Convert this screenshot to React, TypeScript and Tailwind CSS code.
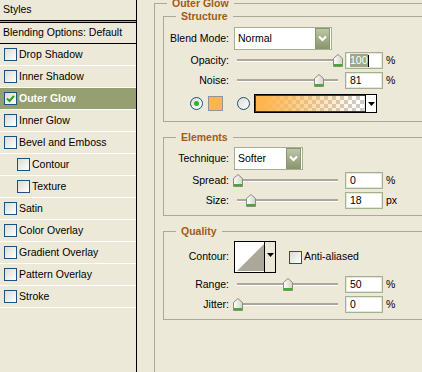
import React from "react";

const styleItems = [
  { name: "Drop Shadow" },
  { name: "Inner Shadow" },
  { name: "Outer Glow", active: true },
  { name: "Inner Glow" },
  { name: "Bevel and Emboss" },
  { name: "Contour", indent: true },
  { name: "Texture", indent: true },
  { name: "Satin" },
  { name: "Color Overlay" },
  { name: "Gradient Overlay" },
  { name: "Pattern Overlay" },
  { name: "Stroke" },
];

const CheckBox: React.FC<{ checked?: boolean }> = ({ checked }) => (
  <div className="flex h-[13px] w-[13px] shrink-0 items-center justify-center border border-[#1c5180] bg-[linear-gradient(135deg,#dcdbd3,#ffffff)]">
    {checked ? (
      <svg width="9" height="9" viewBox="0 0 9 9">
        <path d="M1 4.5 L3.5 7 L8 1.8" fill="none" stroke="#21a121" strokeWidth="2" />
      </svg>
    ) : null}
  </div>
);

const Radio: React.FC<{ checked?: boolean }> = ({ checked }) => (
  <div className="flex h-[13px] w-[13px] shrink-0 items-center justify-center rounded-full border border-[#1c5180] bg-[linear-gradient(135deg,#dcdbd3,#ffffff)]">
    {checked ? <div className="h-[5px] w-[5px] rounded-full bg-[#2cb12c]" /> : null}
  </div>
);

const Thumb = () => (
  <svg width="10" height="13" viewBox="0 0 10 13">
    <defs>
      <linearGradient id="thumbFill" x1="0" y1="0" x2="1" y2="0">
        <stop offset="0" stopColor="#ffffff" />
        <stop offset="1" stopColor="#d4d3c8" />
      </linearGradient>
    </defs>
    <path d="M0.5 4.5 L5 0.5 L9.5 4.5 V12.5 H0.5 Z" fill="url(#thumbFill)" stroke="#8d8b80" />
    <rect x="1" y="10" width="8" height="2" fill="#3fae2a" />
  </svg>
);

// track spans 100px, thumb centre = pct
const Slider: React.FC<{ pct: number }> = ({ pct }) => (
  <div className="relative ml-[4px] h-[17px] w-[109px] shrink-0">
    <div className="absolute left-[4px] right-[4px] top-[7px] h-[2px] bg-[#aca899] shadow-[0_1px_0_#ffffff]" />
    <div className="absolute top-[2px]" style={{ left: pct - 0.5 }}>
      <Thumb />
    </div>
  </div>
);

const NumBox: React.FC<{ value: string; unit: string; selected?: boolean }> = ({
  value,
  unit,
  selected,
}) => (
  <>
    <div className="ml-[3px] flex h-[17px] w-[38px] shrink-0 items-center border border-[#a5b08e] bg-white pl-[4px] shadow-[inset_0_0_0_1px_#e4e8da]">
      {selected ? (
        <>
          <span className="bg-[#9fa78a] leading-[13px] text-white">{value}</span>
          <span className="h-[12px] w-px bg-black" />
        </>
      ) : (
        value
      )}
    </div>
    <span className="ml-[3px]">{unit}</span>
  </>
);

const Select: React.FC<{ value: string; width: string }> = ({ value, width }) => (
  <div
    className={`ml-[5px] flex h-[23px] shrink-0 items-center justify-between border border-[#a5b08e] bg-white pl-[3px] pr-px ${width}`}
  >
    <span>{value}</span>
    <div className="flex h-[21px] w-[15px] items-center justify-center border border-[#8a9670] bg-[linear-gradient(#bcc6a4,#8b9770)]">
      <svg width="11" height="9" viewBox="0 0 11 9">
        <path d="M2 2.5 L5.5 6 L9 2.5" fill="none" stroke="#ffffff" strokeWidth="2.2" />
      </svg>
    </div>
  </div>
);

const Label: React.FC<{ text: string }> = ({ text }) => (
  <div className="flex w-[57px] shrink-0 justify-end whitespace-nowrap">{text}</div>
);

const Group: React.FC<{ title: string; className?: string; children: React.ReactNode }> = ({
  title,
  className,
  children,
}) => (
  <fieldset className={`w-[290px] border border-[#aca899] pl-[8px] ${className ?? ""}`}>
    <legend className="ml-[4px] px-[5px] text-[10.5px] font-bold leading-[13px] text-[#a15b16]">
      {title}
    </legend>
    {children}
  </fieldset>
);

export default function App() {
  return (
    <div className="flex h-[372px] w-[422px] overflow-hidden bg-[#ece9d8] font-['Liberation_Sans',Arial,sans-serif] text-[10.5px] text-black">
      {/* styles list */}
      <div className="flex w-[137px] shrink-0 flex-col border-r border-black">
        <div className="flex h-[20px] items-center pl-[3px]">Styles</div>
        <div className="h-[3px] border-y border-black bg-[#aca899]" />
        <div className="flex h-[21px] items-center border-b border-black pl-[3px]">
          Blending Options: Default
        </div>
        {styleItems.map((item) => (
          <div
            key={item.name}
            className={`flex h-[22px] items-center gap-px border-b border-white ${
              item.indent ? "pl-[17px]" : "pl-[4px]"
            } ${item.active ? "bg-[#959f70] font-bold text-white" : ""}`}
          >
            <CheckBox checked={item.active} />
            <span className="ml-px">{item.name}</span>
          </div>
        ))}
      </div>

      {/* options */}
      <div className="min-w-0 flex-1 overflow-hidden pl-[17px]">
        <fieldset className="-mt-[3px] h-[400px] w-[320px] border border-[#aca899] pl-[8px]">
          <legend className="ml-[4px] px-[5px] text-[10.5px] font-bold leading-[13px] text-[#a15b16]">
            Outer Glow
          </legend>

          <Group title="Structure" className="pb-[8px] pt-[4px]">
            <div className="flex h-[23px] items-center">
              <Label text="Blend Mode:" />
              <Select value="Normal" width="w-[98px]" />
            </div>
            <div className="mt-[2px] flex h-[17px] items-center">
              <Label text="Opacity:" />
              <Slider pct={100} />
              <NumBox value="100" unit="%" selected />
            </div>
            <div className="mt-[3px] flex h-[17px] items-center">
              <Label text="Noise:" />
              <Slider pct={81} />
              <NumBox value="81" unit="%" />
            </div>
            <div className="mt-[5px] flex h-[19px] items-center pl-[18px]">
              <Radio checked />
              <div className="ml-[5px] h-[15px] w-[15px] border border-[#949494] bg-[#fdb64e]" />
              <div className="ml-[14px]">
                <Radio />
              </div>
              <div className="ml-[4px] flex h-[19px] w-[123px] border border-black shadow-[inset_0_0_0_1px_#3a3a3a]">
                <div className="m-px flex-1 bg-[image:linear-gradient(to_right,#fdb64e_8%,rgba(253,182,78,0)_96%),repeating-conic-gradient(#cccccc_0_25%,#ffffff_0_50%)] bg-[length:100%_100%,8px_8px]" />
                <div className="flex w-[11px] items-center justify-center border-l border-black bg-white">
                  <svg width="7" height="4" viewBox="0 0 7 4">
                    <path d="M0 0 H7 L3.5 4 Z" fill="#000000" />
                  </svg>
                </div>
              </div>
            </div>
          </Group>

          <Group title="Elements" className="mt-[9px] pb-[6px] pt-[3px]">
            <div className="flex h-[23px] items-center">
              <Label text="Technique:" />
              <Select value="Softer" width="w-[69px]" />
            </div>
            <div className="mt-[2px] flex h-[17px] items-center">
              <Label text="Spread:" />
              <Slider pct={0} />
              <NumBox value="0" unit="%" />
            </div>
            <div className="mt-[3px] flex h-[17px] items-center">
              <Label text="Size:" />
              <Slider pct={13} />
              <NumBox value="18" unit="px" />
            </div>
          </Group>

          <Group title="Quality" className="mt-[9px] pb-[6px] pt-[3px]">
            <div className="flex h-[32px] items-center">
              <Label text="Contour:" />
              <div className="ml-[5px] flex h-[32px] w-[42px] border border-black bg-[#ece9d8]">
                <div className="w-[30px] border-r border-black bg-white p-px">
                  <svg width="28" height="28" viewBox="0 0 28 28">
                    <polygon points="1,28 28,1 28,28" fill="#aca899" />
                  </svg>
                </div>
                <div className="flex flex-1 justify-center pt-[11px]">
                  <svg width="7" height="4" viewBox="0 0 7 4">
                    <path d="M0 0 H7 L3.5 4 Z" fill="#000000" />
                  </svg>
                </div>
              </div>
              <div className="ml-[13px]">
                <CheckBox />
              </div>
              <span className="ml-[2px]">Anti-aliased</span>
            </div>
            <div className="mt-[3px] flex h-[17px] items-center">
              <Label text="Range:" />
              <Slider pct={50} />
              <NumBox value="50" unit="%" />
            </div>
            <div className="mt-[3px] flex h-[17px] items-center">
              <Label text="Jitter:" />
              <Slider pct={0} />
              <NumBox value="0" unit="%" />
            </div>
          </Group>
        </fieldset>
      </div>
    </div>
  );
}
